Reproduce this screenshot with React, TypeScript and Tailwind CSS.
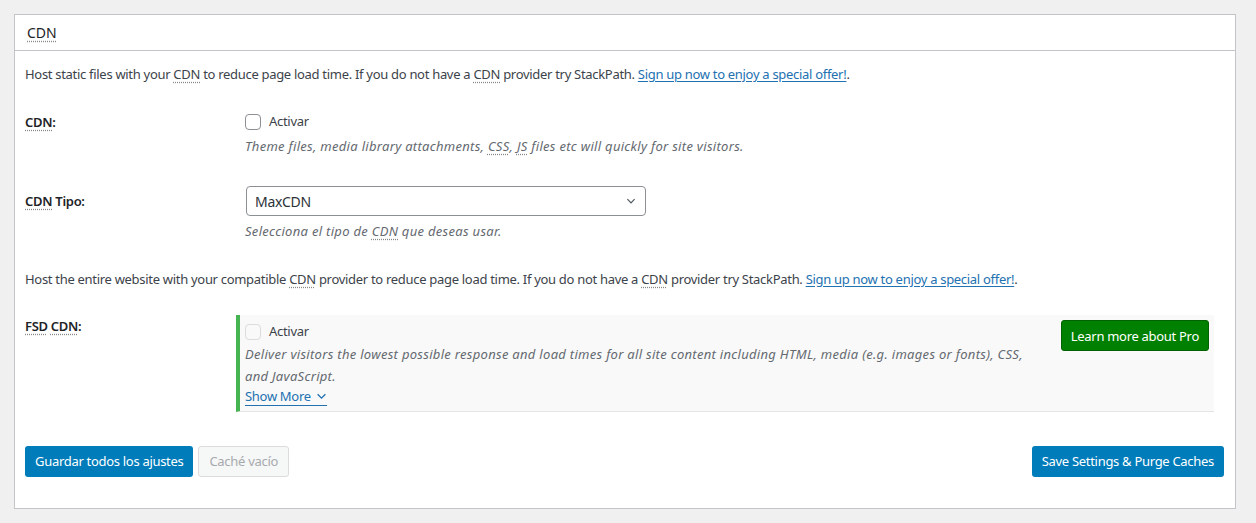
import React from "react";

const Abbr = ({ children }: { children: React.ReactNode }) => (
  <span className="[text-decoration-line:underline] [text-decoration-style:dotted] [text-underline-offset:3px] decoration-[#888]">{children}</span>
);

const Link = ({ children }: { children: React.ReactNode }) => (
  <a className="text-[#2271b1] underline underline-offset-2">{children}</a>
);

export default function App() {
  return (
    <div className="min-h-[523px] w-[1256px] bg-[#f0f0f1] pt-[14px] pl-[14px] text-[13px] tracking-[-0.3px] text-[#3c434a]" style={{ fontFamily: "'Noto Sans', sans-serif" }}>
      <div className="w-[1222px] h-[495px] border border-[#c3c4c7] bg-white">
        <div className="h-[36px] border-b border-[#c3c4c7] pl-[12px] pt-[8px] text-[14px] tracking-[0px] text-[#1d2327] leading-[20px]">
          <Abbr>CDN</Abbr>
        </div>
        <div className="pl-[10px] pr-[11px]">
          <p className="mt-[13px] leading-[20px]">
            Host static files with your <Abbr>CDN</Abbr> to reduce page load time. If you do not have a <Abbr>CDN</Abbr> provider try StackPath. <Link>Sign up now to enjoy a special offer!</Link>.
          </p>

          <div className="flex mt-[28px]">
            <div className="w-[220px] shrink-0 font-semibold text-[#1d2327] leading-[20px]"><Abbr>CDN</Abbr>:</div>
            <div>
              <label className="flex items-center h-[20px]">
                <span className="w-[16px] h-[16px] rounded-[4px] border border-[#8c8f94] bg-white inline-block" />
                <span className="ml-[8px]">Activar</span>
              </label>
              <p className="mt-[4px] italic text-[#646970] leading-[20px] tracking-[0.3px]">
                Theme files, media library attachments, <Abbr>CSS</Abbr>, <Abbr>JS</Abbr> files etc will quickly for site visitors.
              </p>
            </div>
          </div>

          <div className="flex mt-[30px]">
            <div className="w-[221px] shrink-0 font-semibold text-[#1d2327] leading-[20px] pt-[5px]"><Abbr>CDN</Abbr> Tipo:</div>
            <div>
              <div className="w-[400px] h-[30px] rounded-[4px] border border-[#8c8f94] flex items-center justify-between pl-[8px] pr-[8px] text-[14px] text-[#2c3338]">
                <span>MaxCDN</span>
                <svg width="12" height="12" viewBox="0 0 20 20"><path d="M4 7l6 6 6-6" fill="none" stroke="#50575e" strokeWidth="2" /></svg>
              </div>
              <p className="mt-[5px] italic text-[#646970] leading-[20px] -ml-px tracking-[0.3px]">
                Selecciona el tipo de <Abbr>CDN</Abbr> que deseas usar.
              </p>
            </div>
          </div>

          <p className="mt-[28px] leading-[20px]">
            Host the entire website with your compatible <Abbr>CDN</Abbr> provider to reduce page load time. If you do not have a <Abbr>CDN</Abbr> provider try StackPath. <Link>Sign up now to enjoy a special offer!</Link>.
          </p>

          <div className="flex mt-[26px]">
            <div className="w-[211px] shrink-0 font-semibold text-[#1d2327] leading-[20px] pt-[1px]"><Abbr>FSD</Abbr> <Abbr>CDN</Abbr>:</div>
            <div className="w-[978px] h-[97px] border-l-4 border-[#46b450] bg-[#f9f9f9] border-b border-b-[#e5e5e5] flex justify-between pl-[5px] pr-[5px] pt-[6px]">
              <div>
                <label className="flex items-center h-[22px]">
                  <span className="w-[16px] h-[16px] rounded-[4px] border border-[#dcdcde] bg-[#f9f9f9] inline-block" />
                  <span className="ml-[8px]">Activar</span>
                </label>
                <p className="mt-[0px] italic text-[#646970] leading-[22px] w-[790px] tracking-[0.3px]">
                  Deliver visitors the lowest possible response and load times for all site content including HTML, media (e.g. images or fonts), CSS, and JavaScript.
                </p>
                <a className="text-[#2271b1] leading-[18px] inline-flex items-center border-b border-[#2271b1]">
                  Show More
                  <svg className="ml-[5px]" width="11" height="11" viewBox="0 0 20 20"><path d="M3 6l7 7 7-7" fill="none" stroke="#2271b1" strokeWidth="2.5" /></svg>
                </a>
              </div>
              <button className="h-[31px] mt-[-1px] px-[9px] rounded-[3px] bg-[#008000] border border-[#006200] text-white leading-[20px] whitespace-nowrap">
                Learn more about Pro
              </button>
            </div>
          </div>

          <div className="flex items-center justify-between mt-[34px]">
            <div className="flex gap-[5px]">
              <button className="h-[31px] px-[10px] rounded-[3px] bg-[#007cba] text-white">Guardar todos los ajustes</button>
              <button className="h-[31px] px-[10px] rounded-[3px] bg-[#f6f7f7] border border-[#dcdcde] text-[#a7aaad]">Caché vacío</button>
            </div>
            <button className="h-[31px] px-[10px] rounded-[3px] bg-[#007cba] text-white">Save Settings &amp; Purge Caches</button>
          </div>
        </div>
      </div>
    </div>
  );
}
